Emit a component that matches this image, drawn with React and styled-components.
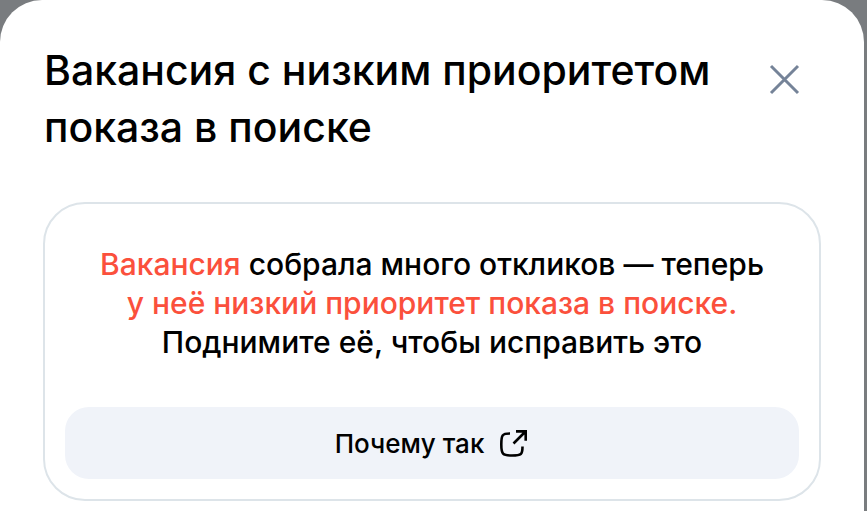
import React from "react";
import styled, { createGlobalStyle } from "styled-components";

const GlobalStyle = createGlobalStyle`
  *, *::before, *::after { box-sizing: border-box; }
  body {
    margin: 0;
    background: #797c7f;
    color: #000000;
    font-family: Inter, "Noto Sans", sans-serif;
  }
`;

const Dialog = styled.section`
  min-height: 100vh;
  margin-right: 3px;
  padding: 42px 43px 10px;
  background: #ffffff;
  border-radius: 42px 42px 0 0;
`;

const Header = styled.header`
  display: flex;
  justify-content: space-between;
  align-items: flex-start;
  gap: 24px;
  padding: 0 16px 0 1px;
  margin-bottom: 46px;
`;

const Title = styled.h1`
  margin: 0;
  max-width: 690px;
  font-size: 41px;
  font-weight: 550;
  line-height: 57px;
`;

const CloseButton = styled.button`
  display: flex;
  margin-top: 18px;
  padding: 4px;
  border: 0;
  background: none;
  color: #758398;
  cursor: pointer;
`;

const Card = styled.article`
  padding: 41px 20px 20px;
  border: 2px solid #dde4e9;
  border-radius: 42px;
`;

const Message = styled.p`
  margin: 0 0 45px;
  font-size: 30px;
  font-weight: 500;
  line-height: 39px;
  text-align: center;
`;

const Accent = styled.span`
  color: #fb503c;
`;

const ReasonLink = styled.a`
  display: flex;
  align-items: center;
  justify-content: center;
  gap: 15px;
  height: 72px;
  border-radius: 24px;
  background: #f0f3f9;
  color: #000000;
  font-size: 26px;
  font-weight: 500;
  text-decoration: none;
`;

export default function App() {
  return (
    <>
      <GlobalStyle />
      <Dialog role="dialog" aria-labelledby="dialog-title">
        <Header>
          <Title id="dialog-title">
            Вакансия с низким приоритетом
            <br />
            показа в поиске
          </Title>
          <CloseButton type="button" aria-label="Закрыть">
            <svg width="32" height="32" viewBox="0 0 32 32" fill="none" stroke="currentColor" strokeWidth="3">
              <path d="M2 2 29 29M29 2 2 29" />
            </svg>
          </CloseButton>
        </Header>
        <Card>
          <Message>
            <Accent>Вакансия</Accent> собрала много откликов — теперь
            <br />
            <Accent>у неё низкий приоритет показа в поиске.</Accent>
            <br />
            Поднимите её, чтобы исправить это
          </Message>
          <ReasonLink href="#reason">
            Почему так
            <svg width="30" height="30" viewBox="0 0 30 30" fill="none" stroke="currentColor" strokeWidth="2.6">
              <path d="M11 5.5C3 5.5 2.3 7 2.3 16.5S3.5 27.5 13 27.5 23.5 26.5 23.5 18.5" />
              <path d="M14.5 15.5 26 4M17 3.4h9.7v9.3" />
            </svg>
          </ReasonLink>
        </Card>
      </Dialog>
    </>
  );
}
